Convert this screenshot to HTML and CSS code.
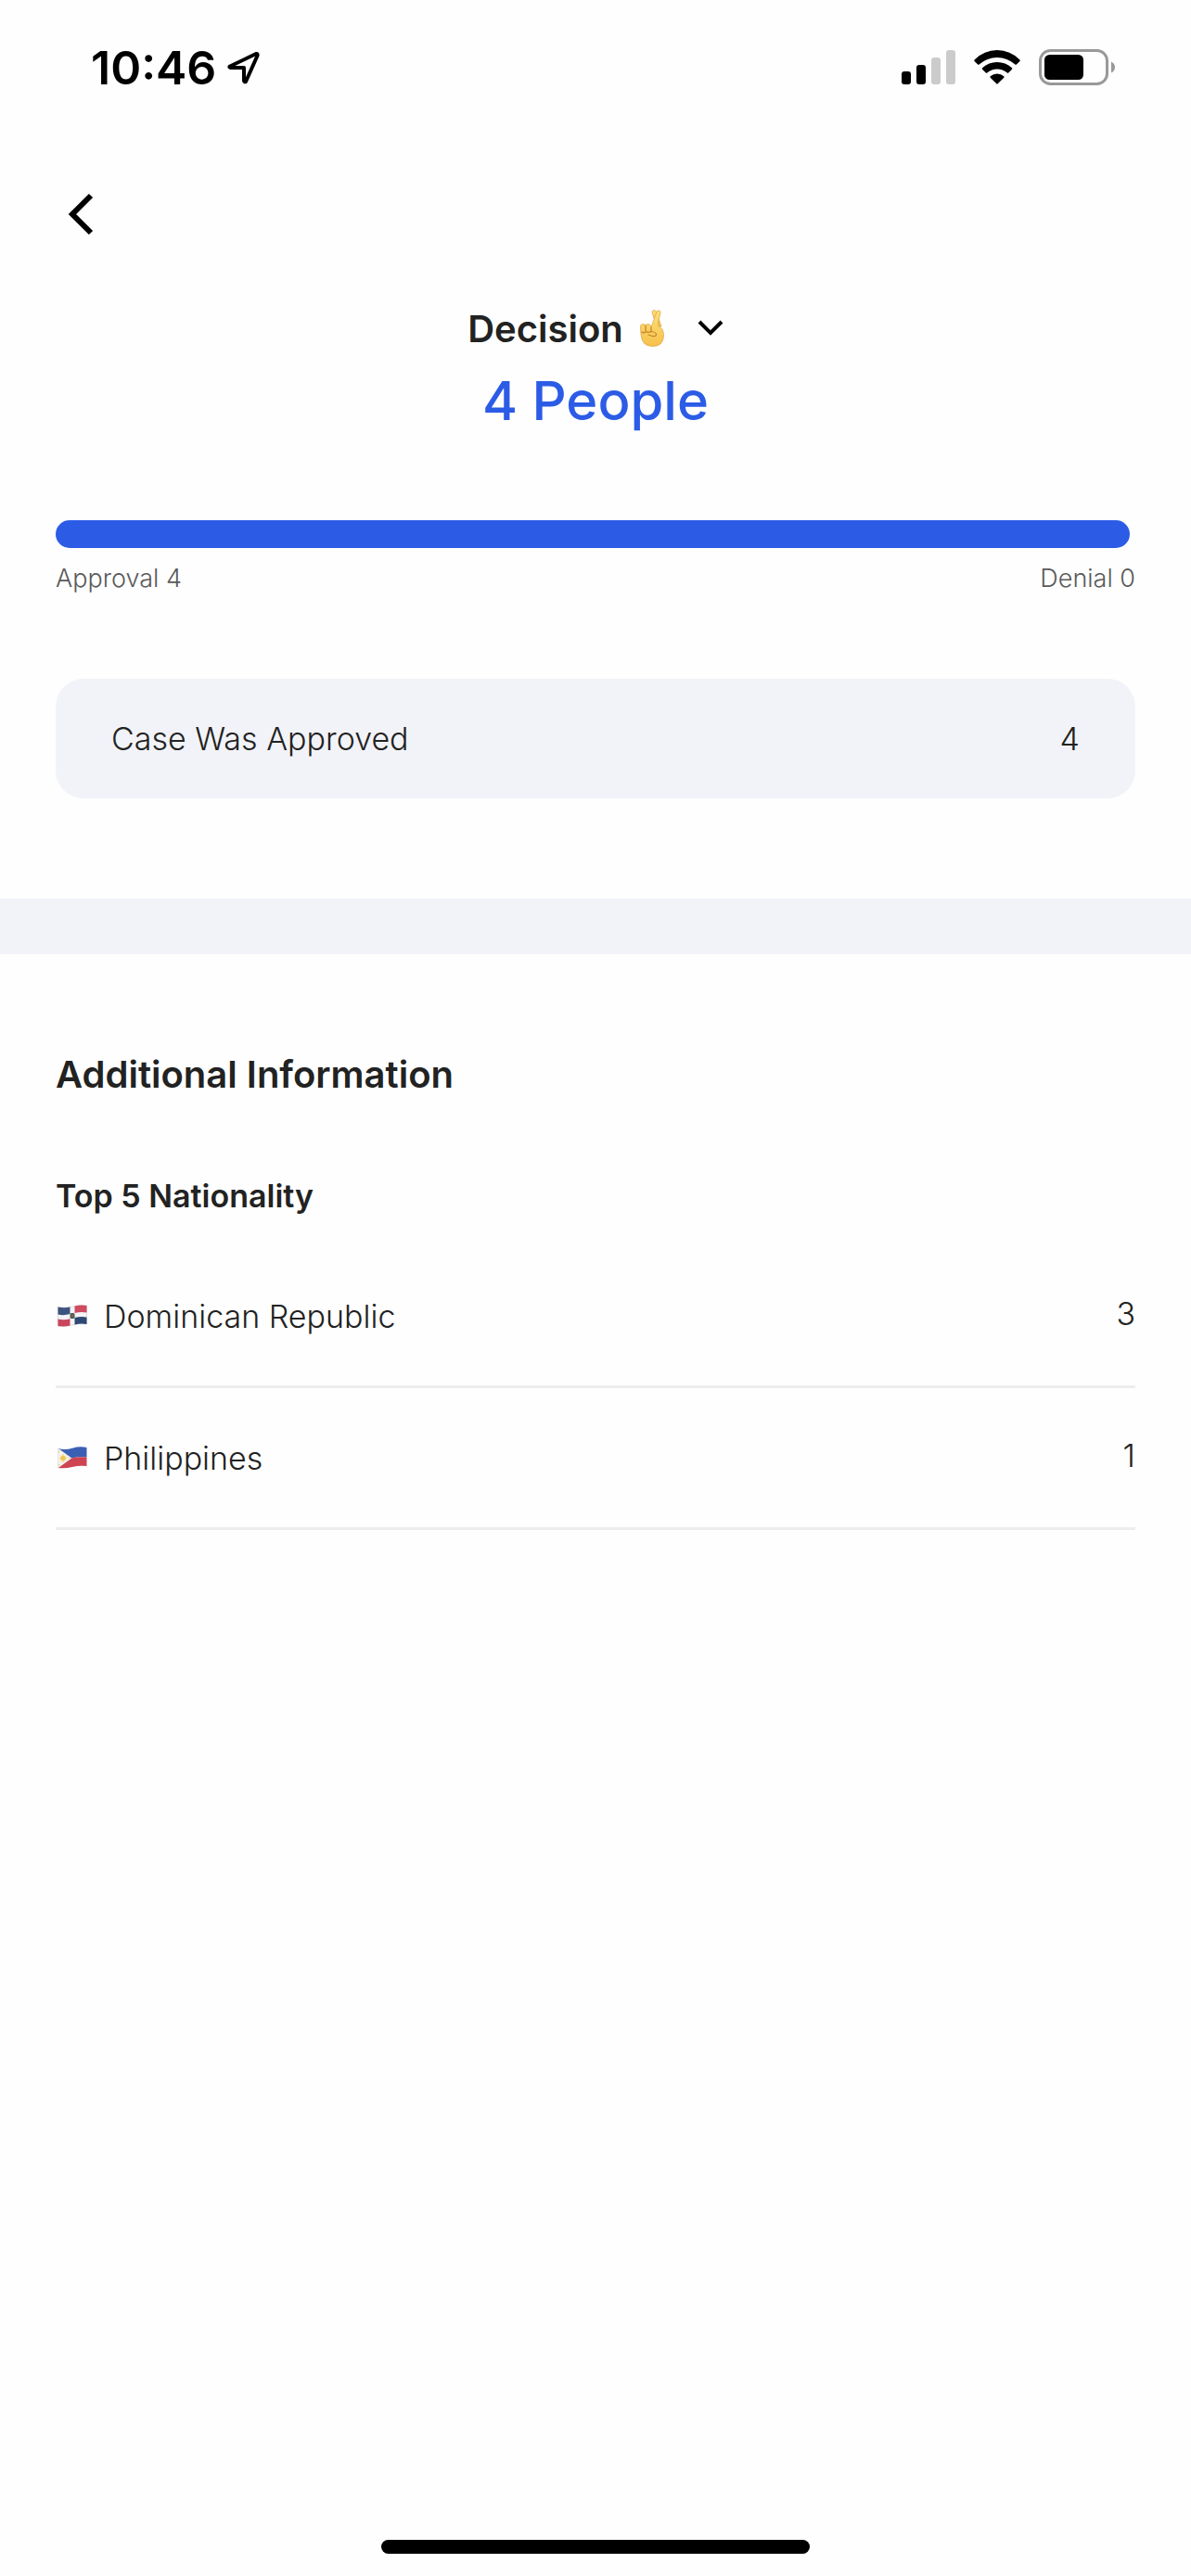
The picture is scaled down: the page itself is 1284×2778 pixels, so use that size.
FILE: index.html
```html
<!DOCTYPE html>
<html lang="en">
<head>
  <meta charset="utf-8">
  <title>Decision</title>
  <meta name="viewport" content="width=device-width, initial-scale=1.0">
  <link rel="stylesheet" href="styles.css">
</head>
<body>
  <div class="status-bar">
    <div class="status-left">
      <span class="time">10:46</span>
      <svg class="location" width="36" height="36" viewBox="0 0 36 36">
        <path d="M3 16.5 L31 3 Q33 2.500 32.500 5 L20 33 Q18.500 34 18 32 V18 H4 Q1.500 17.500 3 16.500 Z" fill="none" stroke="#000" stroke-width="4" stroke-linejoin="round"/>
      </svg>
    </div>
    <div class="status-right">
      <svg width="58" height="38" viewBox="0 0 58 38">
        <rect x="0" y="23" width="10" height="14" rx="3"/>
        <rect x="16" y="16" width="10" height="21" rx="3"/>
        <rect x="32" y="8" width="10" height="29" rx="3" fill="#cbcbcb"/>
        <rect x="48" y="0" width="10" height="37" rx="3" fill="#cbcbcb"/>
      </svg>
      <svg width="50" height="38" viewBox="0 0 50 38">
        <path d="M0.500 10.500 Q11 0 25 0 Q39 0 49.500 10.500 Q50 11.200 49.500 12 L45.600 15.700 Q45 16 44.400 15.600 Q36 8 25 8 Q14 8 5.600 15.600 Q5 16 4.400 15.700 L0.500 12 Q0 11.200 0.500 10.500 Z"/>
        <path d="M9 19.300 Q16 13 25 13 Q34 13 41 19.300 Q41.600 20 41 20.700 L37.200 24.400 Q36.500 25 35.800 24.400 Q31 20.500 25 20.500 Q19 20.500 14.200 24.400 Q13.500 25 12.800 24.400 L9 20.700 Q8.400 20 9 19.300 Z"/>
        <path d="M17.700 28.200 Q21 25.500 25 25.500 Q29 25.500 32.300 28.200 Q33 29 32.300 29.700 L25.700 36.300 Q25 37 24.300 36.300 L17.700 29.700 Q17 29 17.700 28.200 Z"/>
      </svg>
      <svg width="82" height="40" viewBox="0 0 82 40">
        <rect x="1.500" y="1.500" width="72" height="36" rx="11" fill="none" stroke="#999" stroke-width="3"/>
        <rect x="6" y="6" width="42" height="27" rx="5.500"/>
        <path d="M78 13.500 Q82 15.500 82 19.500 Q82 23.500 78 25.500 Z" fill="#999"/>
      </svg>
    </div>
  </div>

  <header class="nav">
    <button class="back-btn" aria-label="Back">
      <svg width="30" height="48" viewBox="0 0 30 48">
        <path d="M26 4 L6 24 L26 44" fill="none" stroke="#000" stroke-width="6"/>
      </svg>
    </button>
  </header>

  <main>
    <section class="decision">
      <button class="picker" aria-haspopup="listbox">
        <span>Decision</span>
        <svg class="fingers" width="26" height="40" viewBox="0 0 26 40">
          <defs>
            <linearGradient id="skin" x1="0" y1="0" x2="0" y2="1">
              <stop offset="0" stop-color="#ffe07a"/>
              <stop offset="1" stop-color="#f6c14c"/>
            </linearGradient>
          </defs>
          <g fill="url(#skin)" stroke="#d9a240" stroke-width="0.700" stroke-linejoin="round">
            <path d="M18 18 L13 3 Q13 0.500 15.200 0.500 Q17 0.500 17.500 2.500 L23 18 Z"/>
            <path d="M12 19 L18 2 Q19 0.300 21 1 Q22.500 2 22 4 L19.500 13 L20 18 Q25.500 20 25.500 28 Q25 39.500 13.500 39.500 Q5 39 2.500 33 Q0.500 28 0.500 18 Q0.700 15.500 3 15.500 Q5.500 15.500 6 17 Q7 15 9.500 15.500 Q11.500 16 12 19 Z"/>
          </g>
          <path d="M6 17 V23 M12 19 V23 M2 24 Q4 26 6.500 23.500 Q9 25 11.500 23.500 Q17 24 17.500 26.500 Q17.500 29 13.500 28.500 L9 27" fill="none" stroke="#c08428" stroke-width="1.200" stroke-linecap="round"/>
        </svg>
        <svg width="28" height="18" viewBox="0 0 28 18">
          <path d="M2 2 L14 14 L26 2" fill="none" stroke="#000" stroke-width="4"/>
        </svg>
      </button>
      <h1>4 People</h1>

      <div class="ratio-bar">
        <div class="approval" style="flex-grow: 4"></div>
        <div class="denial" style="flex-grow: 0"></div>
      </div>
      <div class="ratio-labels">
        <span>Approval 4</span>
        <span>Denial 0</span>
      </div>

      <div class="card">
        <span>Case Was Approved</span>
        <span>4</span>
      </div>
    </section>

    <section class="info">
      <h2>Additional Information</h2>
      <table>
        <caption>Top 5 Nationality</caption>
        <tbody>
          <tr>
            <th scope="row">
              <div class="country">
                <svg width="32" height="24" viewBox="0 0 32 24">
                  <path d="M0.500 2.500 Q8 4.500 16 2 T31.500 1 V21 Q24 20 16 22 T0.500 23 Z" fill="#f4f4f6" stroke="#c9c9ce" stroke-width="0.600"/>
                  <path d="M0.500 2.500 Q7 4 13.500 2.600 V10 Q7 12 0.500 10.500 Z" fill="#3d547e"/>
                  <path d="M18.500 1.500 Q25 0 31.500 1 V8.500 Q25 7.500 18.500 9 Z" fill="#d04a60"/>
                  <path d="M0.500 15.500 Q7 17 13.500 15.200 V22.500 Q7 24 0.500 23 Z" fill="#cb465b"/>
                  <path d="M18.500 14 Q25 12.500 31.500 13.500 V21 Q25 20 18.500 21.500 Z" fill="#2e4874"/>
                  <rect x="13.500" y="9" width="5" height="6" rx="1.500" fill="#46604f"/>
                  <path d="M16 10.500 V13.500" stroke="#b7535b" stroke-width="1.500"/>
                </svg>
                <span>Dominican Republic</span>
              </div>
            </th>
            <td>3</td>
          </tr>
          <tr>
            <th scope="row">
              <div class="country">
                <svg width="32" height="24" viewBox="0 0 32 24">
                  <path d="M0.500 2 Q8 4 16 1.700 T31.500 1 V11.500 Q24 10.500 15 12.500 Z" fill="#3c5fb6"/>
                  <path d="M0.500 23 Q8 24 16 22 T31.500 21 V11.500 Q24 10.500 15 12.500 Z" fill="#ce4450"/>
                  <path d="M0.500 2 L15 12.500 L0.500 23 Z" fill="#f5f3ef" stroke="#d5d2cc" stroke-width="0.500"/>
                  <circle cx="6" cy="12.500" r="2.500" fill="#efc44e"/>
                  <path d="M6 8 V17 M2 12.500 H10 M3 9.500 L9 15.500 M9 9.500 L3 15.500 M1.500 5 V6.500 M1.500 19 V20.500 M12 12.500 H13" stroke="#efc44e" stroke-width="1"/>
                </svg>
                <span>Philippines</span>
              </div>
            </th>
            <td>1</td>
          </tr>
        </tbody>
      </table>
    </section>
  </main>

  <div class="home-indicator"></div>
</body>
</html>
```

FILE: styles.css
```css
* {
  box-sizing: border-box;
}

body {
  display: flex;
  flex-direction: column;
  min-height: 100vh;
  margin: 0;
  background: #fefefe;
  color: #222;
  font-family: Inter, "Liberation Sans", sans-serif;
  font-size: 34px;
  font-weight: 350;
}

button {
  padding: 0;
  border: none;
  background: none;
  color: inherit;
  font: inherit;
  cursor: pointer;
}

svg {
  display: block;
  flex-shrink: 0;
}

h1, h2 {
  margin: 0;
}

main {
  flex: 1;
}

/* status bar */
.status-bar {
  display: flex;
  justify-content: space-between;
  align-items: center;
  height: 146px;
  padding: 0 82px 0 98px;
}

.status-left, .status-right {
  display: flex;
  align-items: center;
}

.status-left {
  gap: 12px;
  color: #000;
}

.status-right {
  gap: 20px;
}

.time {
  font-size: 50px;
  font-weight: 600;
}

.nav {
  display: flex;
  height: 170px;
  padding: 61px 72px;
}

.back-btn {
  height: 48px;
}

/* decision summary */
.decision {
  padding: 0 60px 108px;
  border-bottom: 60px solid #f2f3f8;
}

.picker {
  display: flex;
  align-items: center;
  height: 76px;
  margin: 0 auto;
  font-size: 40px;
  font-weight: 600;
}

.fingers {
  margin: 0 36px 0 18px;
}

h1 {
  margin-bottom: 89px;
  color: #2c5ce6;
  font-size: 58px;
  font-weight: 500;
  line-height: 80px;
  text-align: center;
}

.ratio-bar {
  display: flex;
  gap: 6px;
  height: 30px;
  margin-bottom: 15px;
}

.approval, .denial {
  border-radius: 15px;
}

.approval {
  background: #2c5ce6;
}

.denial {
  background: #f2f3f8;
}

.ratio-labels {
  display: flex;
  justify-content: space-between;
  margin-bottom: 90px;
  color: #5a5a5a;
  font-size: 27px;
  line-height: 36px;
}

.card {
  display: flex;
  justify-content: space-between;
  align-items: center;
  height: 129px;
  padding: 0 60px;
  border-radius: 30px;
  background: #f2f3f8;
}

/* additional information */
.info {
  padding: 100px 60px;
}

h2 {
  margin-bottom: 76px;
  font-size: 40px;
  font-weight: 600;
  line-height: 60px;
}

table {
  width: 100%;
  border-collapse: separate;
  border-spacing: 0;
}

caption {
  padding-bottom: 29px;
  font-weight: 600;
  line-height: 50px;
  text-align: left;
}

th, td {
  height: 153px;
  padding: 0;
  border-bottom: 3px solid #ededed;
  font-weight: 350;
}

th {
  text-align: left;
}

td {
  padding-bottom: 6px;
  text-align: right;
}

.country {
  display: flex;
  align-items: center;
  gap: 18px;
  padding-left: 2px;
}

.home-indicator {
  width: 36%;
  height: 15px;
  margin: 0 auto 24px;
  border-radius: 8px;
  background: #000;
}
```
